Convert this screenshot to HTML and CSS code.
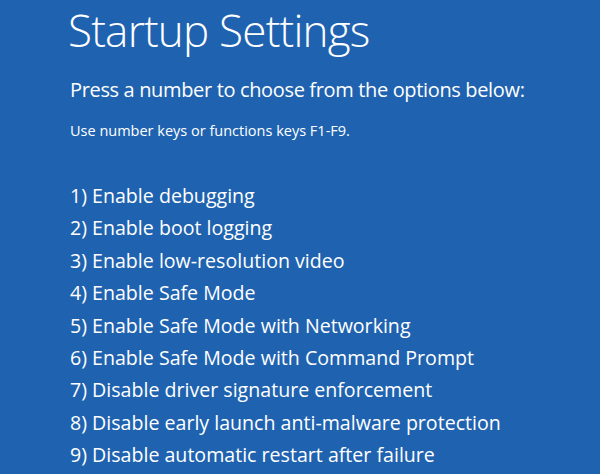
FILE: index.html
```html
<!DOCTYPE html>
<html lang="en">
<head>
    <meta charset="UTF-8">
    <meta name="viewport" content="width=device-width, initial-scale=1.0">
    <title>Startup Settings</title>
    <link rel="stylesheet" href="styles.css">
</head>
<body>
    <div class="screen">
        <h1 class="title">Startup Settings</h1>
        <p class="prompt">Press a number to choose from the options below:</p>
        <p class="hint">Use number keys or functions keys F1-F9.</p>
        <ol class="options">
            <li>1) Enable debugging</li>
            <li>2) Enable boot logging</li>
            <li>3) Enable low-resolution video</li>
            <li>4) Enable Safe Mode</li>
            <li>5) Enable Safe Mode with Networking</li>
            <li>6) Enable Safe Mode with Command Prompt</li>
            <li>7) Disable driver signature enforcement</li>
            <li>8) Disable early launch anti-malware protection</li>
            <li>9) Disable automatic restart after failure</li>
        </ol>
    </div>
</body>
</html>
```

FILE: styles.css
```css
html, body {
    margin: 0;
    height: 100%;
}

body {
    background-color: #1f63b0; /* Windows boot blue */
    color: #ffffff;
    font-family: 'Open Sans', 'Noto Sans', sans-serif;
    overflow: hidden;
}

.screen {
    padding: 0 0 0 68px;
}

.title {
    margin: 0;
    font-size: 44px;
    font-weight: 300;
    line-height: 60px;
    letter-spacing: -0.8px;
}

.prompt {
    margin: 16px 0 0 2px;
    font-size: 20px;
    font-weight: 400;
    line-height: 28px;
    letter-spacing: -0.35px;
}

.hint {
    margin: 17px 0 0 2px;
    font-size: 14.5px;
    line-height: 20px;
}

.options {
    list-style: none;
    margin: 39px 0 0 2px;
    padding: 0;
}

.options li {
    font-size: 19.6px;
    line-height: 32.4px;
}
```
